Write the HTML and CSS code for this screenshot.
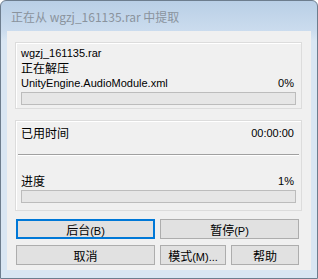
FILE: index.html
```html
<!doctype html>
<html lang="zh">
  <head>
    <meta charset="utf-8" />
    <title>正在从 wgzj_161135.rar 中提取</title>
    <link rel="stylesheet" href="styles.css">
  </head>
  <body>
    <div class="window">
      <div class="titlebar">正在从 wgzj_161135.rar 中提取</div>

      <div class="client">
        <div class="group file-group">
          <div class="line name">wgzj_161135.rar</div>
          <div class="line status cn">正在解压</div>
          <div class="row">
            <span>UnityEngine.AudioModule.xml</span>
            <span>0%</span>
          </div>
          <div class="progress"></div>
        </div>

        <div class="group stats-group">
          <div class="row">
            <span class="cn">已用时间</span>
            <span>00:00:00</span>
          </div>
          <div class="separator"></div>
          <div class="row">
            <span class="cn">进度</span>
            <span>1%</span>
          </div>
          <div class="progress"></div>
        </div>

        <div class="buttons">
          <button class="btn default">后台<span class="key">(B)</span></button>
          <button class="btn">暂停<span class="key">(P)</span></button>
          <button class="btn">取消</button>
          <div class="pair">
            <button class="btn">模式<span class="key">(M)...</span></button>
            <button class="btn">帮助</button>
          </div>
        </div>
      </div>
    </div>
  </body>
</html>
```

FILE: styles.css
```css
*{
  margin: 0;
  padding: 0;
  box-sizing: border-box;
}

body{
  font-family: "Liberation Sans", "Noto Sans CJK SC", sans-serif;
  font-size: 11px;
  color: #000;
  background: #fff;
}

.window{
  width: 318px;
  height: 279px;
  display: flex;
  flex-direction: column;
  border: 1px solid #6d7d8e;
  border-radius: 6px 6px 0 0;
  background: linear-gradient(#b9cfe6 0px, #cbdcee 30px, #d9e6f3 40px, #d9e6f3 100%);
}

.titlebar{
  height: 30px;
  padding: 8px 0 0 10px;
  font-family: "Noto Sans CJK SC", sans-serif;
  font-size: 12px;
  line-height: 16px;
  color: #8a939d;
}

.client{
  height: 239px;
  margin: 0 6px 0 6px;
  padding: 11px 9px 0 8px;
  background: #f0f0f0;
  display: flex;
  flex-direction: column;
}

.group{
  border: 1px solid #dcdcdc;
  box-shadow: inset 1px 1px 0 #fff;
  padding: 4px 7px 0 5px;
}

.file-group{
  height: 67px;
}

.stats-group{
  height: 91px;
  margin-top: 11px;
  padding-top: 5px;
}

.line{
  height: 14px;
  line-height: 14px;
}

.line.name{
  height: 13px;
  line-height: 13px;
}

.line.status{
  height: 16px;
  line-height: 16px;
  font-size: 12px;
}

.cn{
  font-family: "Noto Sans CJK SC", sans-serif;
  font-size: 12px;
}

.row{
  display: flex;
  justify-content: space-between;
  align-items: center;
  height: 14px;
  line-height: 14px;
}

.progress{
  height: 13px;
  margin: 2px -2px 0 0;
  border: 1px solid #bcbcbc;
  background: #e6e6e6;
}

.separator{
  height: 2px;
  margin: 14px -5px 18px -3px;
  border-top: 1px solid #a0a0a0;
  border-bottom: 1px solid #fff;
}

.buttons{
  margin-top: 8px;
  padding-left: 1px;
  display: grid;
  grid-template-columns: 139px 139px;
  column-gap: 5px;
  row-gap: 6px;
}

.btn{
  height: 20px;
  font-family: "Noto Sans CJK SC", sans-serif;
  font-size: 12px;
  color: #000;
  background: #e1e1e1;
  border: 1px solid #adadad;
}

.btn .key{
  font-family: "Liberation Sans", sans-serif;
  font-size: 11px;
}

.btn.default{
  border: 2px solid #0078d7;
}

.pair{
  display: flex;
  gap: 5px;
}

.pair .btn:first-child{
  width: 66px;
}

.pair .btn:last-child{
  flex: 1;
}
```
